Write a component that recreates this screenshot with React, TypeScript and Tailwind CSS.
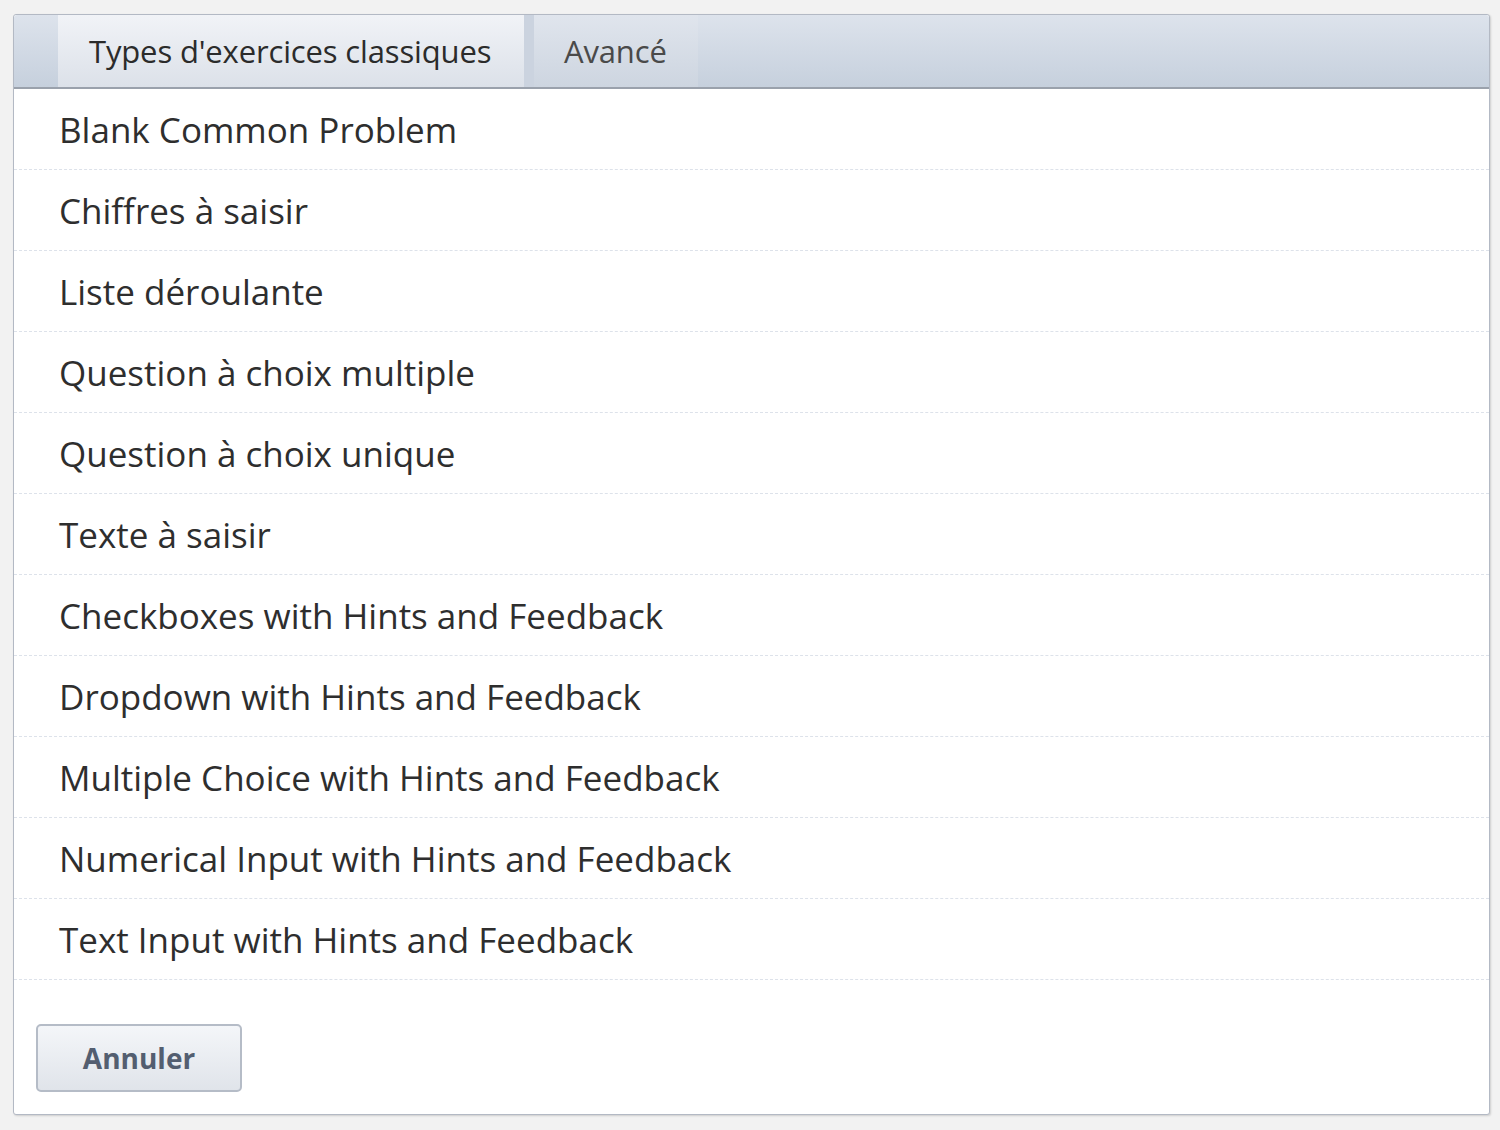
const items = [
  'Blank Common Problem',
  'Chiffres à saisir',
  'Liste déroulante',
  'Question à choix multiple',
  'Question à choix unique',
  'Texte à saisir',
  'Checkboxes with Hints and Feedback',
  'Dropdown with Hints and Feedback',
  'Multiple Choice with Hints and Feedback',
  'Numerical Input with Hints and Feedback',
  'Text Input with Hints and Feedback',
];

export default function App() {
  return (
    <div className="min-h-[1130px] bg-[#f2f2f2] pt-[14px] pl-[13px] pr-[10px] font-['Open_Sans',sans-serif]">
      <div className="w-[1477px] rounded-[3px] border border-[#b3b9c4] bg-white shadow-[1px_1px_2px_rgba(0,0,0,0.15)]">
        <div className="flex h-[74px] bg-gradient-to-b from-[#dde3ec] to-[#c6d0dd] border-b-2 border-[#9aa1ac] pl-[44px] rounded-t-[3px]">
          <div className="flex items-center h-full w-[466px] bg-gradient-to-b from-[#f1f3f7] to-[#dce1e9] pl-[31px] text-[31px] tracking-[-0.15px] text-[#2b2b2b]">
            Types d'exercices classiques
          </div>
          <div className="w-[10px] h-full bg-[#cbd3df]" />
          <div className="flex items-center h-full w-[164px] bg-gradient-to-b from-[#e0e5ed] to-[#cdd5e0] pl-[30px] text-[31px] tracking-[-0.15px] text-[#4a4a4a]">
            Avancé
          </div>
        </div>
        <ul>
          {items.map((item) => (
            <li
              key={item}
              className="flex items-center h-[81px] pl-[45px] pt-[2px] border-b border-dashed border-[#dde2ea] text-[35px] text-[#2e2e2e]"
            >
              {item}
            </li>
          ))}
        </ul>
        <div className="pt-[44px] pb-[22px] pl-[22px]">
          <button className="w-[206px] h-[68px] rounded-[5px] border-2 border-[#b5bcc7] bg-gradient-to-b from-[#f4f6f9] to-[#e0e4ea] text-[28px] font-bold text-[#535e70]">
            Annuler
          </button>
        </div>
      </div>
    </div>
  );
}
